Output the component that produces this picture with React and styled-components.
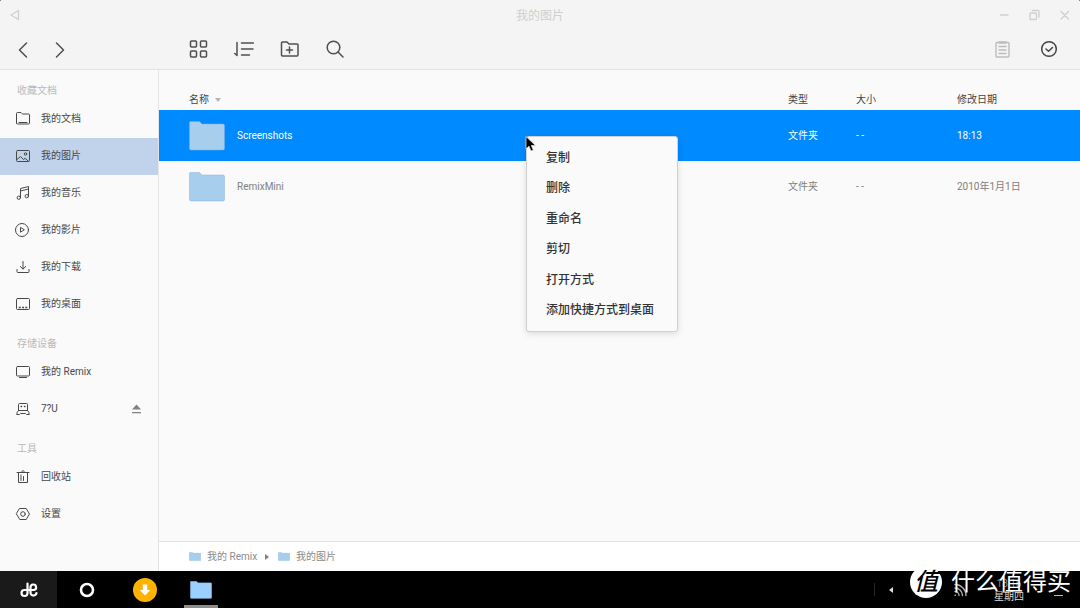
import React from "react";
import styled, { createGlobalStyle } from "styled-components";

const GlobalStyle = createGlobalStyle`
  * { box-sizing: border-box; }
  body {
    margin: 0;
    background: #000;
    font-family: Roboto, "Noto Sans CJK SC", sans-serif;
    font-size: 10px;
    line-height: 16px;
    color: #555;
  }
  button {
    font: inherit;
    color: inherit;
    background: none;
    border: 0;
    padding: 0;
    margin: 0;
    text-align: left;
  }
  svg { display: block; flex: none; }
`;

const Desktop = styled.div`
  position: relative;
  min-height: 100vh;
  display: flex;
  flex-direction: column;
`;

const Window = styled.div`
  flex: 1;
  display: flex;
  flex-direction: column;
  background: #fafafa;
  border-radius: 2px 2px 0 0;
  overflow: hidden;
`;

const TitleBar = styled.header`
  display: grid;
  grid-template-columns: 1fr auto 1fr;
  align-items: center;
  height: 30px;
  padding: 0 7px;
  background: #f4f4f4;
  color: #cfcfcf;
`;

const WindowTitle = styled.h1`
  margin: 0;
  padding-top: 2px;
  font-size: 12px;
  font-weight: 400;
`;

const WindowControls = styled.div`
  display: flex;
  justify-content: flex-end;
  gap: 14px;
`;

const IconButton = styled.button`
  display: flex;
  align-items: center;
  justify-content: center;
  width: ${(p) => p.$size || 20}px;
  height: ${(p) => p.$size || 20}px;
  color: ${(p) => p.$color || "#4f4f4f"};
`;

const Toolbar = styled.div`
  display: flex;
  align-items: center;
  height: 40px;
  padding: 0 21px 1px 0;
  background: #f4f4f4;
  border-bottom: 1px solid #e2e2e2;
`;

const NavGroup = styled.nav`
  display: flex;
  gap: 16px;
  flex: 0 0 188px;
  padding-left: 14px;
`;

const ToolGroup = styled.div`
  display: flex;
  gap: 26px;
  flex: ${(p) => (p.$grow ? 1 : "none")};
`;

const Body = styled.div`
  flex: 1;
  display: flex;
`;

const Sidebar = styled.aside`
  flex: 0 0 159px;
  border-right: 1px solid #e4e4e4;
`;

const SideHeading = styled.h2`
  margin: 0;
  height: 31px;
  padding: 13px 0 0 17px;
  font-size: 10px;
  font-weight: 400;
  color: #b9b9b9;
`;

const SideItem = styled.button`
  display: flex;
  align-items: center;
  gap: 10px;
  width: 100%;
  height: 37px;
  padding: 0 15px 1px;
  color: #484848;
  background: ${(p) => (p.$active ? "#c1d2eb" : "transparent")};
`;

const SideLabel = styled.span`
  flex: 1;
`;

const Main = styled.main`
  flex: 1;
  min-width: 0;
  display: flex;
  flex-direction: column;
`;

const FileArea = styled.div`
  flex: 1;
`;

const FileTable = styled.table`
  width: 100%;
  table-layout: fixed;
  border-collapse: collapse;
`;

const HeadCell = styled.th`
  width: ${(p) => (p.$width ? p.$width + "px" : "auto")};
  height: 40px;
  padding: ${(p) => (p.$first ? "20px 0 0 30px" : "20px 0 0")};
  font-weight: 400;
  text-align: left;
  color: #444;
`;

const SortLabel = styled.span`
  display: flex;
  align-items: center;
  gap: 6px;
`;

const FileRow = styled.tr`
  height: 51px;
  background: ${(p) => (p.$selected ? "#008aff" : "transparent")};
  color: ${(p) => (p.$selected ? "#fff" : "#808080")};
`;

const Cell = styled.td`
  padding: ${(p) => (p.$first ? "0 0 0 30px" : "0")};
`;

const FileName = styled.div`
  display: flex;
  align-items: center;
  gap: 12px;
`;

const Breadcrumb = styled.nav`
  display: flex;
  align-items: center;
  height: 30px;
  padding-left: 30px;
  background: #fff;
  border-top: 1px solid #e2e2e2;
`;

const Crumb = styled.a`
  display: flex;
  align-items: center;
  gap: 6px;
  color: #8a8a8a;
  text-decoration: none;
`;

const CrumbArrow = styled.span`
  width: 0;
  margin: 0 9px 0 8px;
  border: 3px solid transparent;
  border-left: 4px solid #808080;
  border-right: 0;
`;

const Menu = styled.div`
  position: absolute;
  left: 526px;
  top: 136px;
  display: flex;
  flex-direction: column;
  justify-content: space-between;
  width: 152px;
  height: 196px;
  padding: 6px 0;
  background: #fafafa;
  border: 1px solid #cfcfcf;
  border-radius: 3px;
  box-shadow: 0 2px 6px rgba(0, 0, 0, 0.12);
`;

const MenuItem = styled.button`
  height: 30px;
  padding-left: 19px;
  font-size: 12px;
  font-weight: 500;
  color: #333;
`;

const Pointer = styled.svg`
  position: absolute;
  left: 525px;
  top: 135px;
`;

const Taskbar = styled.footer`
  display: flex;
  height: 37px;
  background: #000;
  color: #fff;
`;

const TaskButton = styled.button`
  display: flex;
  align-items: center;
  justify-content: center;
  width: 57px;
  margin-right: 1px;
  background: ${(p) => (p.$start ? "#1a1a1a" : "transparent")};
`;

const RunningButton = styled(TaskButton)`
  width: 34px;
  margin: 0 10px;
  border-bottom: 3px solid #8c8c8c;
  border-top: 3px solid transparent;
`;

const Tray = styled.div`
  position: relative;
  flex: none;
  display: flex;
  align-items: center;
  width: 206px;
  height: 37px;
  margin-left: auto;
`;

const TrayDivider = styled.span`
  width: 1px;
  height: 13px;
  background: #262626;
`;

const TrayArrow = styled.span`
  margin-left: 14px;
  border: 3px solid transparent;
  border-right: 4px solid #ddd;
  border-left: 0;
`;

const TrayIcons = styled.div`
  display: flex;
  gap: 24px;
  margin-left: 20px;
  color: #aaa;
`;

const Clock = styled.div`
  display: flex;
  flex-direction: column;
  width: 32px;
  margin-left: 24px;
  line-height: 13px;
  text-align: center;
  color: #ddd;
`;

const ClockTime = styled.time`
  color: #888;
`;

const TrayMenu = styled.span`
  width: 9px;
  height: 12px;
  margin-left: 29px;
  border-top: 1px solid #bbb;
  border-bottom: 1px solid #bbb;
`;

const Watermark = styled.div`
  position: absolute;
  left: 36px;
  bottom: 10px;
  display: flex;
  align-items: center;
  gap: 9px;
  font-size: 24px;
  font-weight: 400;
  line-height: 32px;
  white-space: nowrap;
  color: #fff;
`;

const WatermarkBadge = styled.span`
  width: 32px;
  height: 32px;
  border-radius: 50%;
  background: #fff;
  color: #000;
  font-weight: 500;
  font-style: italic;
  text-align: center;
`;

function Icon({ size = 20, width = 1, children }) {
  return (
    <svg
      width={size}
      height={size}
      viewBox={`0 0 ${size} ${size}`}
      fill="none"
      stroke="currentColor"
      strokeWidth={width}
      strokeLinecap="round"
      strokeLinejoin="round"
      aria-hidden="true"
    >
      {children}
    </svg>
  );
}

function Folder({ width, height, color = "#a8ceee" }) {
  return (
    <svg width={width} height={height} viewBox="0 0 36 30" preserveAspectRatio="none" aria-hidden="true">
      <path d="M1.5.5h9l2.5 2.5h21a1.500 1.500 0 0 1 1.500 1.500v23a1.500 1.500 0 0 1-1.500 1.500h-32A1.500 1.500 0 0 1 .5 27.500V1.500a1 1 0 0 1 1-1z" fill={color} stroke="#7fb0dc" strokeOpacity=".45" />
    </svg>
  );
}

const sideIcons = {
  docs: (
    <>
      <path d="M1.500 12V2.500a1 1 0 0 1 1-1h3.500l1.500 1.500h6a1 1 0 0 1 1 1v8a1 1 0 0 1-1 1h-11a1 1 0 0 1-1-1z" />
      <path d="M4 11.500h8" />
    </>
  ),
  pictures: (
    <>
      <rect x="1.500" y="2.500" width="13" height="11" rx="1" />
      <circle cx="10.500" cy="6" r="1.200" />
      <path d="M2 11.500l3.500-3 3 3 1.500-1.200 3.500 3" />
    </>
  ),
  music: (
    <>
      <path d="M5.500 12.500V3.500l8-2v9.500M5.500 6l8-2" />
      <circle cx="3.800" cy="12.700" r="1.700" />
      <circle cx="11.800" cy="11.200" r="1.700" />
    </>
  ),
  video: (
    <>
      <circle cx="7" cy="8" r="6.500" />
      <path d="M5.500 5.800v4.400l3.500-2.200z" />
    </>
  ),
  download: (
    <path d="M8 2.500v7.500M5.300 7.500L8 10l2.700-2.500M2 10.500v2a1 1 0 0 0 1 1h10a1 1 0 0 0 1-1v-2" />
  ),
  desktop: (
    <>
      <rect x="1.500" y="2.500" width="13" height="11" rx="1" />
      <path d="M4.500 11.500h.5M7.800 11.500h.5M11 11.500h.5" strokeWidth="1.500" strokeLinecap="square" />
    </>
  ),
  device: (
    <>
      <rect x="1.500" y="2.500" width="13" height="9.500" rx="1" />
      <path d="M4.500 13.500h7" />
    </>
  ),
  usb: (
    <>
      <path d="M3.500 9.500V3.500a1 1 0 0 1 1-1h7a1 1 0 0 1 1 1v6M3.500 9.500h9M3.500 9.500l-1.500 2v2M12.500 9.500l1.500 2v2M2 13.500h2.500l1-1h5l1 1h2.500" />
      <path d="M6 5.500h.5M9.500 5.500h.5" strokeWidth="1.400" />
    </>
  ),
  trash: (
    <path d="M2 3.500h12M6.500 3.200c0-2 3-2 3 0M3.500 4v9.500h9V4M6 6v5.500M8.500 7.500v4" />
  ),
  settings: (
    <>
      <path d="M4.800 2.500h6.400l3.300 5.500-3.300 5.500H4.800L1.500 8z" />
      <circle cx="8" cy="8" r="2.300" />
    </>
  ),
};

const sections = [
  {
    title: "收藏文档",
    items: [
      ["docs", "我的文档"],
      ["pictures", "我的图片"],
      ["music", "我的音乐"],
      ["video", "我的影片"],
      ["download", "我的下载"],
      ["desktop", "我的桌面"],
    ],
  },
  { title: "存储设备", items: [["device", "我的 Remix"], ["usb", "7?U"]] },
  { title: "工具", items: [["trash", "回收站"], ["settings", "设置"]] },
];

const files = [
  { name: "Screenshots", type: "文件夹", size: "- -", date: "18:13", selected: true },
  { name: "RemixMini", type: "文件夹", size: "- -", date: "2010年1月1日" },
];

const menuItems = ["复制", "删除", "重命名", "剪切", "打开方式", "添加快捷方式到桌面"];

export default function App() {
  return (
    <Desktop>
      <GlobalStyle />
      <Window>
        <TitleBar>
          <IconButton $size={16} $color="#d0d0d0" aria-label="返回">
            <Icon size={16} width={1.3}>
              <path d="M11.500 3.500v9L4 8z" />
            </Icon>
          </IconButton>
          <WindowTitle>我的图片</WindowTitle>
          <WindowControls>
            <IconButton $size={16} $color="#d0d0d0" aria-label="最小化">
              <Icon size={16} width={1.4}><path d="M3.500 8h7.500" /></Icon>
            </IconButton>
            <IconButton $size={16} $color="#d0d0d0" aria-label="还原">
              <Icon size={16} width={1.4}>
                <rect x="3" y="6" width="6.500" height="6.500" rx="1" />
                <path d="M5.500 3.500h5.500a1 1 0 0 1 1 1V10" />
              </Icon>
            </IconButton>
            <IconButton $size={16} $color="#d0d0d0" aria-label="关闭">
              <Icon size={16} width={1.4}><path d="M4 4.500l7.500 7.500M11.500 4.500L4 12" /></Icon>
            </IconButton>
          </WindowControls>
        </TitleBar>

        <Toolbar>
          <NavGroup>
            <IconButton aria-label="后退">
              <Icon width={1.5}><path d="M12.500 4L5.500 11l7 7" /></Icon>
            </IconButton>
            <IconButton aria-label="前进">
              <Icon width={1.5}><path d="M6.500 4l7 7-7 7" /></Icon>
            </IconButton>
          </NavGroup>
          <ToolGroup $grow>
            <IconButton aria-label="网格视图">
              <Icon width={1.5}>
                <rect x="2.500" y="2" width="6" height="6" rx="1" />
                <rect x="12.500" y="2" width="6" height="6" rx="1" />
                <rect x="2.500" y="12" width="6" height="6" rx="1" />
                <rect x="12.500" y="12" width="6" height="6" rx="1" />
              </Icon>
            </IconButton>
            <IconButton aria-label="排序">
              <Icon width={1.5}>
                <path d="M3 3.500v13L.8 14.500M7.500 4h12M7.500 10h11.500M7.500 16h8" />
              </Icon>
            </IconButton>
            <IconButton aria-label="新建文件夹">
              <Icon width={1.5}>
                <path d="M1.500 16v-12a1 1 0 0 1 1-1h4.500l2 2h8a1 1 0 0 1 1 1v10a1 1 0 0 1-1 1h-14.500a1 1 0 0 1-1-1zM9.500 8v6M6.500 11h6" />
              </Icon>
            </IconButton>
            <IconButton aria-label="搜索">
              <Icon width={1.5}>
                <circle cx="7.500" cy="8.500" r="6.300" />
                <path d="M12 13l5 5" />
              </Icon>
            </IconButton>
          </ToolGroup>
          <ToolGroup>
            <IconButton $color="#bdbdbd" aria-label="粘贴">
              <Icon width={1.4}>
                <rect x="3" y="3.500" width="13" height="14.500" rx="1" />
                <path d="M6 7.500h7M6 11h7M6 14.500h7" />
                <path d="M6.500 3.500h6" strokeWidth="2.500" />
              </Icon>
            </IconButton>
            <IconButton $color="#444" aria-label="选择">
              <Icon width={1.5}>
                <circle cx="10" cy="10" r="7.300" />
                <path d="M7 10l2.500 2.300L13.500 8.500" />
              </Icon>
            </IconButton>
          </ToolGroup>
        </Toolbar>

        <Body>
          <Sidebar>
            {sections.map((s) => (
              <section key={s.title}>
                <SideHeading>{s.title}</SideHeading>
                {s.items.map(([icon, label]) => (
                  <SideItem key={icon} $active={icon === "pictures"}>
                    <Icon size={16}>{sideIcons[icon]}</Icon>
                    <SideLabel>{label}</SideLabel>
                    {icon === "usb" && (
                      <svg width="12" height="12" viewBox="0 0 12 12" fill="#808080" aria-hidden="true">
                        <path d="M5.500 1.500l4.500 5H1zM1 9h9v1.200H1z" />
                      </svg>
                    )}
                  </SideItem>
                ))}
              </section>
            ))}
          </Sidebar>

          <Main>
            <FileArea>
              <FileTable>
                <thead>
                  <tr>
                    <HeadCell $first>
                      <SortLabel>
                        名称
                        <svg width="6" height="4" viewBox="0 0 6 4" fill="#b5b5b5" aria-hidden="true">
                          <path d="M0 0h6L3 4z" />
                        </svg>
                      </SortLabel>
                    </HeadCell>
                    <HeadCell $width={68}>类型</HeadCell>
                    <HeadCell $width={101}>大小</HeadCell>
                    <HeadCell $width={123}>修改日期</HeadCell>
                  </tr>
                </thead>
                <tbody>
                  {files.map((f) => (
                    <FileRow key={f.name} $selected={f.selected}>
                      <Cell $first>
                        <FileName>
                          <Folder width={36} height={30} />
                          {f.name}
                        </FileName>
                      </Cell>
                      <Cell>{f.type}</Cell>
                      <Cell>{f.size}</Cell>
                      <Cell>{f.date}</Cell>
                    </FileRow>
                  ))}
                </tbody>
              </FileTable>
            </FileArea>
            <Breadcrumb>
              <Crumb href="#remix">
                <Folder width={12} height={9} />
                我的 Remix
              </Crumb>
              <CrumbArrow />
              <Crumb href="#pictures">
                <Folder width={12} height={9} />
                我的图片
              </Crumb>
            </Breadcrumb>
          </Main>
        </Body>
      </Window>

      <Taskbar>
        <TaskButton $start aria-label="开始">
          <Icon size={20} width={2.2}>
            <path d="M8.500 3.500v9.500a3 3 0 1 1-3-3h9.500a2.800 2.800 0 1 0-3.500-2.700v4.700a3 3 0 0 0 6 1" />
          </Icon>
        </TaskButton>
        <TaskButton aria-label="主页">
          <Icon size={20} width={2.6}><circle cx="10" cy="10" r="6" /></Icon>
        </TaskButton>
        <TaskButton aria-label="下载">
          <svg width="24" height="24" viewBox="0 0 24 24" aria-hidden="true">
            <circle cx="12" cy="12" r="12" fill="#ffb300" />
            <path d="M9.800 6.500h4.400v5.500h3L12 17.500 6.800 12h3z" fill="#fff" />
          </svg>
        </TaskButton>
        <RunningButton aria-label="文件管理器">
          <Folder width={22} height={18} color="#9ad0ff" />
        </RunningButton>
        <Tray>
          <TrayDivider />
          <TrayArrow />
          <TrayIcons>
            <Icon size={16}><path d="M3 12.500h8" /></Icon>
            <Icon size={16} width={1.4}>
              <path d="M2 2.500a11 11 0 0 1 11 11M2 6a7.500 7.500 0 0 1 7.500 7.500M2 9.500a4 4 0 0 1 4 4M2 13.200h.5" />
            </Icon>
          </TrayIcons>
          <Clock>
            <ClockTime>18:16</ClockTime>
            <span>星期四</span>
          </Clock>
          <TrayMenu />
          <Watermark>
            <WatermarkBadge>值</WatermarkBadge>
            什么值得买
          </Watermark>
        </Tray>
      </Taskbar>

      <Menu role="menu">
        {menuItems.map((m) => (
          <MenuItem key={m} role="menuitem">{m}</MenuItem>
        ))}
      </Menu>
      <Pointer width="12" height="18" viewBox="0 0 12 18" aria-hidden="true">
        <path d="M1 1.500v12.500l3-2.800 2 4.800 2.300-1-2-4.500h4.200z" fill="#000" stroke="#ddd" strokeWidth=".8" />
      </Pointer>
    </Desktop>
  );
}
